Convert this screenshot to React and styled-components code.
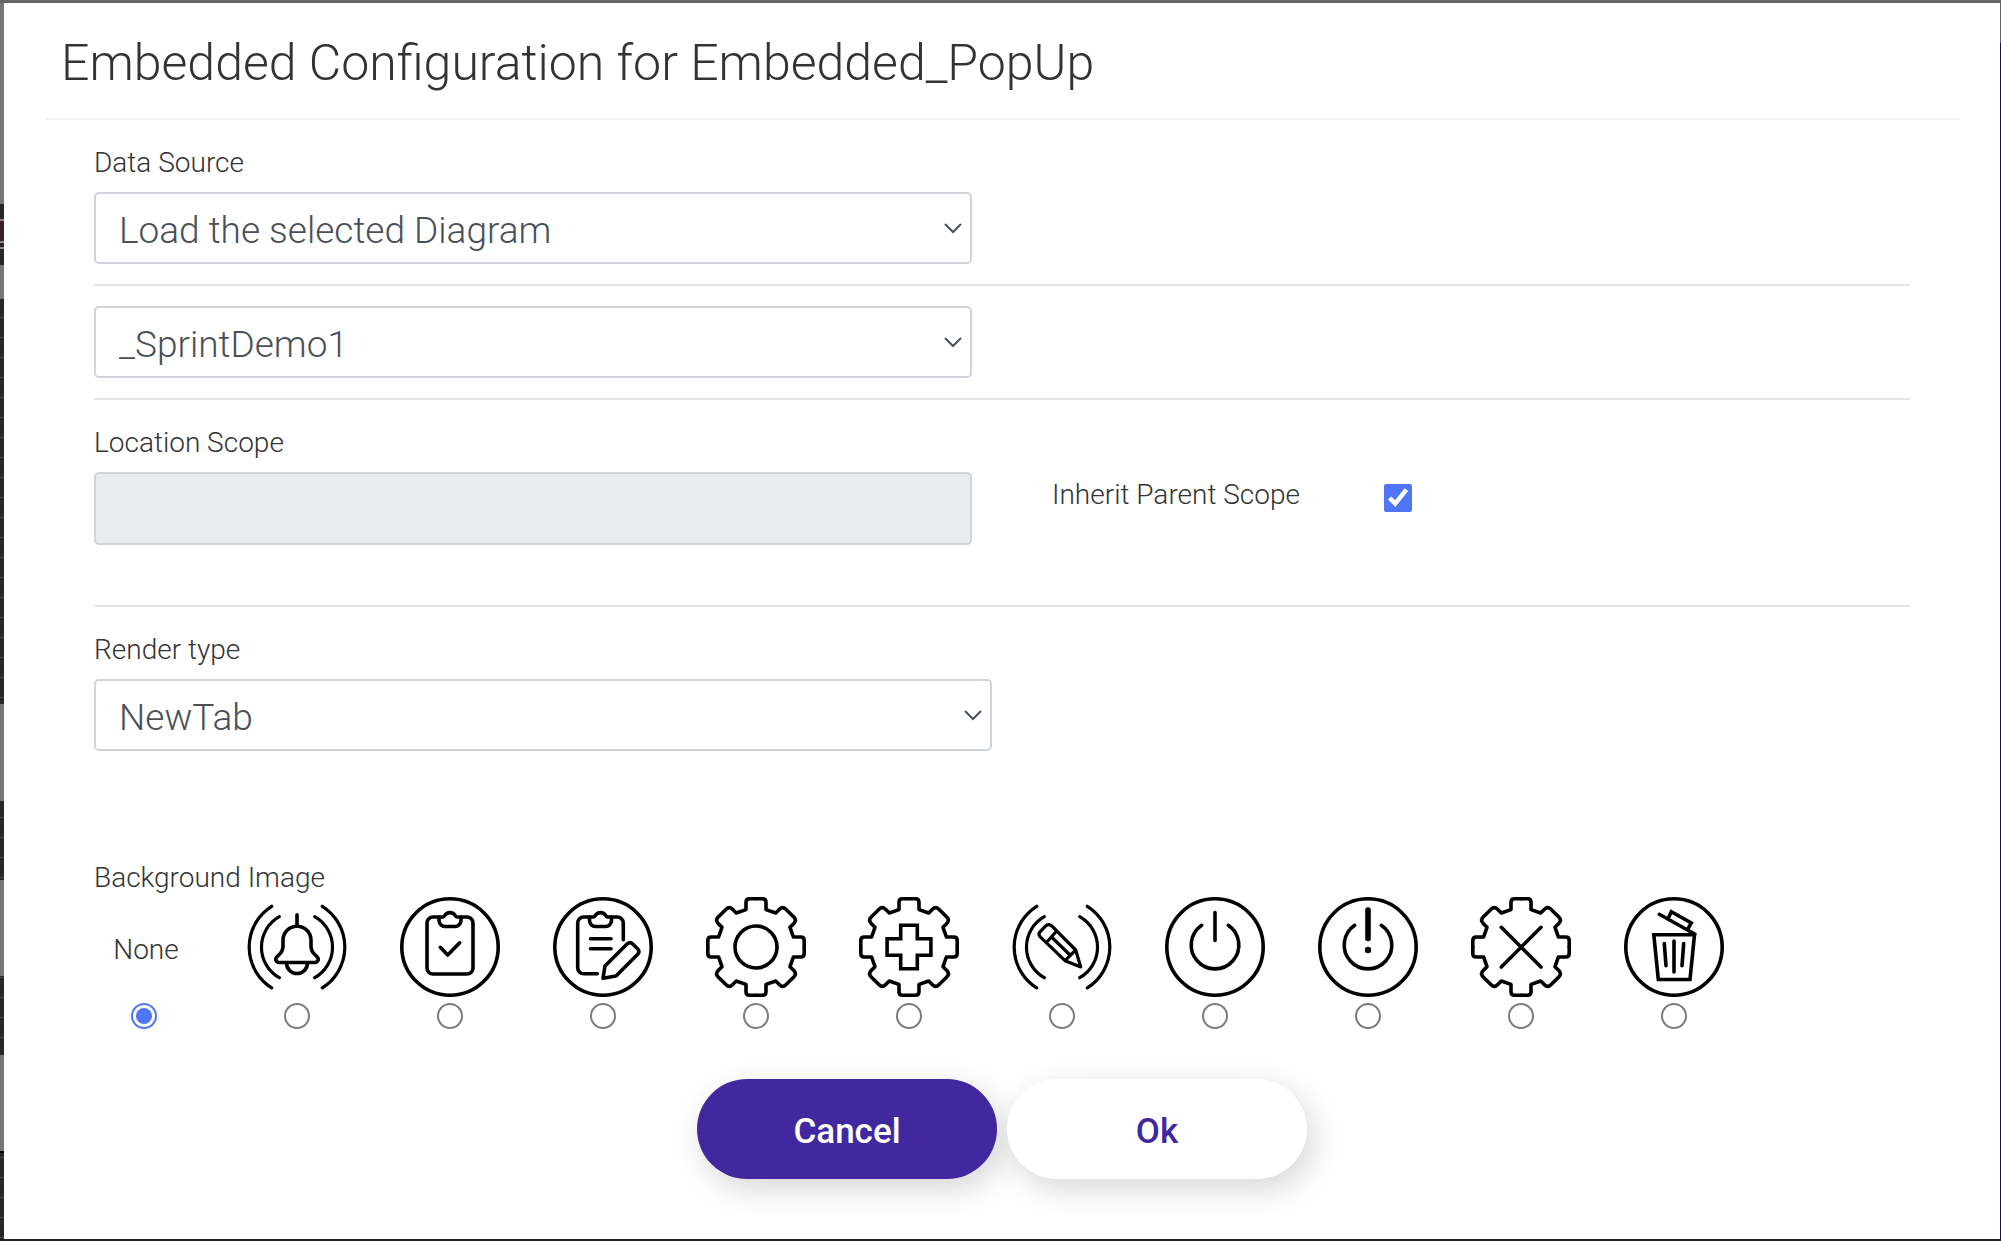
import { useState } from 'react';
import styled, { createGlobalStyle } from 'styled-components';

const GEAR_QUARTER =
  'M50 1.8H43.5Q40 1.8 40 5.3V12.6L30.3 16L26.5 12.2Q23.3 9 20.1 12.2L12.2 20.1Q9 23.3 12.2 26.5L16 30.3L12.6 40H5.3Q1.8 40 1.8 43.5V50';

const Ring = () => <circle cx="50" cy="50" r="48.2" />;

const Gear = () => (
  <>
    {[0, 90, 180, 270].map(angle => (
      <path key={angle} d={GEAR_QUARTER} transform={`rotate(${angle} 50 50)`} />
    ))}
  </>
);

const Waves = () => (
  <path
    strokeWidth="3.2"
    d="M24.7 9.3A48.2 48.2 0 0 0 24.7 90.9M32.3 19.7A35 35 0 0 0 32.3 80.7M75.3 9.3A48.2 48.2 0 0 1 75.3 90.9M67.7 19.7A35 35 0 0 1 67.7 80.7"
  />
);

const PowerArc = () => <path d="M36.7 28.3A23.8 23.8 0 1 0 63.3 28.3" />;

const images = [
  {
    name: 'Alert',
    art: (
      <>
        <Waves />
        <path d="M50 17.8V28M50 29.2a14 14 0 0 1 14 14v6c0 6 3 7.5 6 10.5 2.5 2.5 1 5.8-2.5 5.8H32.5c-3.5 0-5-3.3-2.5-5.8 3-3 6-4.5 6-10.5v-6a14 14 0 0 1 14-14zM39.5 66a10.5 10.5 0 0 0 21 0" />
      </>
    ),
  },
  {
    name: 'Task',
    art: (
      <>
        <Ring />
        <path d="M39 20H33a6 6 0 0 0-6 6v45a6 6 0 0 0 6 6h34a6 6 0 0 0 6-6V26a6 6 0 0 0-6-6h-6" />
        <path d="M39 20h4c2 0 1.5-4.4 7-4.4s5 4.4 7 4.4h4v3.5a6 6 0 0 1-6 6H45a6 6 0 0 1-6-6zM40.3 50.3l7.4 7.7 12-12.2" />
      </>
    ),
  },
  {
    name: 'Edit task',
    art: (
      <>
        <Ring />
        <path d="M36.5 20H30.7a6 6 0 0 0-6 6v44.7a6 6 0 0 0 6 6h13.6M58.5 20h5.8a6 6 0 0 1 6 6v16.7" />
        <path d="M36.5 20h4c2 0 1.5-4.4 7-4.4s5 4.4 7 4.4h4v3.5a6 6 0 0 1-6 6h-10a6 6 0 0 1-6-6zM37.5 41.7h20.5M37.5 51.7h20.5" />
        <path d="M50 81.3l2-12.3L74.3 46.8q2.7-2.3 5.2 0l5.5 5.5q2 2.5-.3 5L63 79z" />
      </>
    ),
  },
  {
    name: 'Settings',
    art: (
      <>
        <Gear />
        <circle cx="50" cy="50" r="21" />
      </>
    ),
  },
  {
    name: 'Add',
    art: (
      <>
        <Gear />
        <path
          strokeLinejoin="miter"
          d="M41.7 28.3h16.6v13.4h13.6v16.6H58.3v13.4H41.7V58.3H28.1V41.7h13.6z"
        />
      </>
    ),
  },
  {
    name: 'Write',
    art: (
      <>
        <Waves />
        <path
          strokeWidth="3.2"
          d="M39.5 28.7L63.7 53L53 63.7L28 39.7Q26 37 28 34.8L34 28.7Q36.8 26.5 39.5 28.7zM44 34.7L34.7 45.3M39.5 40L58 58M63.7 53L68.7 70L53 63.7"
        />
      </>
    ),
  },
  {
    name: 'Power',
    art: (
      <>
        <Ring />
        <PowerArc />
        <path d="M50 15.5V43.5" />
      </>
    ),
  },
  {
    name: 'Power warning',
    art: (
      <>
        <Ring />
        <PowerArc />
        <path d="M50 13V41.5" strokeWidth="5.6" />
        <circle cx="50" cy="53" r="3.2" fill="#000" stroke="none" />
      </>
    ),
  },
  {
    name: 'Remove',
    art: (
      <>
        <Gear />
        <path d="M30.3 30.3L70 70M70 30.3L30.3 70" />
      </>
    ),
  },
  {
    name: 'Delete',
    art: (
      <>
        <Ring />
        <path
          strokeLinejoin="miter"
          d="M29.8 37.7H70.5L66 82.5H34.3zM44 21.7L47.3 14.7L67.3 26L64 31.7"
        />
        <path d="M35.3 17.3L70.7 37M50 44V75M40.3 46.5L42 68.7M59.7 46.5L58 68.7" />
      </>
    ),
  },
];

function SelectBox({ id, value, label }) {
  return (
    <SelectWrap>
      <Select id={id} defaultValue={value} aria-label={label}>
        <option>{value}</option>
      </Select>
      <Chevron viewBox="0 0 20 12" aria-hidden="true">
        <path d="M2 2l8 8 8-8" />
      </Chevron>
    </SelectWrap>
  );
}

function App() {
  const [inherit, setInherit] = useState(true);
  const [image, setImage] = useState('None');

  return (
    <>
      <GlobalStyle />
      <Backdrop>
        <Dialog role="dialog" aria-labelledby="dialog-title">
          <Header>
            <Title id="dialog-title">
              Embedded Configuration for Embedded_PopUp
            </Title>
          </Header>
          <Body>
            <Row $top={23}>
              <Column $gutter={30}>
                <Label htmlFor="source">Data Source</Label>
                <SelectBox id="source" value="Load the selected Diagram" />
              </Column>
            </Row>
            <Divider />
            <Row $top={20}>
              <Column $gutter={30}>
                <SelectBox id="diagram" value="_SprintDemo1" label="Diagram" />
              </Column>
            </Row>
            <Divider />
            <Row $top={23}>
              <Column $gutter={30}>
                <Label htmlFor="scope">Location Scope</Label>
                <TextInput id="scope" type="text" disabled={inherit} />
              </Column>
              <InheritField>
                <InheritLabel htmlFor="inherit">
                  Inherit Parent Scope
                </InheritLabel>
                <Checkbox
                  id="inherit"
                  type="checkbox"
                  checked={inherit}
                  onChange={e => setInherit(e.target.checked)}
                />
              </InheritField>
            </Row>
            <Divider $top={60} />
            <Row $top={23}>
              <Column $gutter={10}>
                <Label htmlFor="render">Render type</Label>
                <SelectBox id="render" value="NewTab" />
              </Column>
            </Row>
            <ImagePicker>
              <Legend>Background Image</Legend>
              <Options>
                <Option>
                  <NoImage>None</NoImage>
                  <Radio
                    type="radio"
                    name="image"
                    checked={image === 'None'}
                    onChange={() => setImage('None')}
                  />
                </Option>
                {images.map(({ name, art }) => (
                  <Option key={name}>
                    <Icon viewBox="0 0 100 100" aria-hidden="true">
                      {art}
                    </Icon>
                    <Radio
                      type="radio"
                      name="image"
                      aria-label={name}
                      checked={image === name}
                      onChange={() => setImage(name)}
                    />
                  </Option>
                ))}
              </Options>
            </ImagePicker>
            <Actions>
              <Button type="button" $primary>
                Cancel
              </Button>
              <Button type="button">Ok</Button>
            </Actions>
          </Body>
        </Dialog>
      </Backdrop>
    </>
  );
}

export default App;

const GlobalStyle = createGlobalStyle`
  * {
    box-sizing: border-box;
  }

  body {
    margin: 0;
    color: #333;
    font-family: Roboto, 'Liberation Sans', sans-serif;
    font-size: 28px;
    font-weight: 300;
  }
`;

/* only a sliver of the dimmed page shows round the dialog */
const Backdrop = styled.div`
  display: flex;
  min-height: 100vh;
  padding: 3px 1px 2px 4px;
  background:
    linear-gradient(#656565, #656565) top / 100% 3px no-repeat,
    linear-gradient(#232021, #232021) bottom / 100% 2px no-repeat,
    linear-gradient(#656565 43px, #14104a 43px) right / 1px 100% no-repeat,
    linear-gradient(
      #777 204px,
      #2a2625 204px 219px,
      #888 219px 221px,
      #3a2224 221px 241px,
      #888 241px 243px,
      #2a2625 243px 247px,
      #888 247px 249px,
      #2a2625 249px 265px,
      #777 265px 299px,
      transparent 299px 704px,
      #777 704px 801px,
      transparent 801px 880px,
      #777 880px 976px,
      transparent 976px 1055px,
      #777 1055px 1151px,
      #000 1151px 1153px,
      transparent 1153px
    ),
    repeating-linear-gradient(#2a2625 0 17px, #4c4847 17px 18px, #2a2625 18px 20px);
`;

const Dialog = styled.main`
  flex: 1;
  background: #fff;
`;

const Header = styled.header`
  margin: 0 40px 0 41px;
  padding: 30px 16px 25px;
  border-bottom: 2px solid #f3f3f3;
`;

const Title = styled.h1`
  margin: 0;
  font-size: 50px;
  font-weight: 300;
  line-height: 60px;
`;

const Body = styled.div`
  padding: 0 90px 60px;
`;

const Row = styled.div`
  display: grid;
  grid-template-columns: 1fr 1fr;
  padding-top: ${props => props.$top}px;
`;

const Column = styled.div`
  padding-right: ${props => props.$gutter}px;
`;

const Label = styled.label`
  display: block;
  margin-bottom: 9px;
  line-height: 40px;
`;

const SelectWrap = styled.div`
  display: grid;
  align-items: center;

  > * {
    grid-area: 1 / 1;
  }
`;

const Select = styled.select`
  appearance: none;
  width: 100%;
  height: 72px;
  padding: 4px 23px 0;
  border: 2px solid #ced4da;
  border-radius: 5px;
  background: #fff;
  color: #495057;
  font: inherit;
  font-size: 37px;
`;

const Chevron = styled.svg`
  justify-self: end;
  width: 20px;
  height: 12px;
  margin-right: 9px;
  fill: none;
  stroke: #495057;
  stroke-width: 2;
  pointer-events: none;
`;

const TextInput = styled.input`
  display: block;
  width: 100%;
  height: 73px;
  padding: 4px 23px 0;
  border: 2px solid #ced4da;
  border-radius: 5px;
  background: #fff;
  color: #495057;
  font: inherit;
  font-size: 37px;

  &:disabled {
    background: #eaebef;
  }
`;

const Divider = styled.hr`
  height: 2px;
  margin: ${props => props.$top || 20}px 0 0;
  border: 0;
  background: #e5e5e5;
`;

const InheritField = styled.div`
  display: flex;
  align-items: flex-start;
  padding: 52px 0 0 50px;
`;

const InheritLabel = styled.label`
  flex: 0 0 332px;
  line-height: 40px;
`;

const Checkbox = styled.input`
  width: 28px;
  height: 28px;
  margin: 9px 0;
  accent-color: #4f76f6;
`;

const ImagePicker = styled.fieldset`
  margin: 106px 0 0;
  padding: 0;
  border: 0;
`;

const Legend = styled.legend`
  height: 40px;
  padding: 0;
  line-height: 42px;
`;

const Options = styled.div`
  display: flex;
  gap: 53px;
`;

const Option = styled.label`
  display: flex;
  flex-direction: column;
  align-items: center;
  gap: 6px;
  width: 100px;
`;

const NoImage = styled.span`
  height: 100px;
  padding-left: 4px;
  line-height: 106px;
`;

const Icon = styled.svg`
  width: 100px;
  height: 100px;
  fill: none;
  stroke: #000;
  stroke-width: 3.6;
  stroke-linecap: round;
  stroke-linejoin: round;
`;

const Radio = styled.input`
  appearance: none;
  width: 26px;
  height: 26px;
  margin: 0;
  border: 2px solid #7c7c7c;
  border-radius: 50%;

  &:checked {
    padding: 3px;
    border-color: #4f76f6;
    background: #4f76f6 content-box;
  }
`;

const Actions = styled.div`
  display: flex;
  justify-content: center;
  gap: 10px;
  margin-top: 50px;
`;

const Button = styled.button`
  width: 300px;
  height: 100px;
  padding: 4px 0 0;
  border: 0;
  border-radius: 50px;
  background: ${props => (props.$primary ? '#41289e' : '#fff')};
  box-shadow: 6px 10px 30px rgba(0, 0, 0, 0.16);
  color: ${props => (props.$primary ? '#fff' : '#41289e')};
  font: inherit;
  font-size: 35px;
  font-weight: 500;
`;
